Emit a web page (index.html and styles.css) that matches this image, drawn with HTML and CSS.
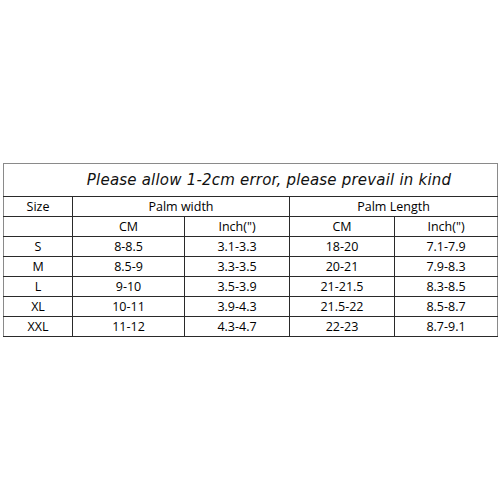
FILE: index.html
```html
<!DOCTYPE html>
<html>
<head>
<meta charset="utf-8">
<link rel="stylesheet" href="styles.css">
</head>
<body>
<div class="page">
<table class="size-table">
  <colgroup>
    <col class="c-size">
    <col class="c-a">
    <col class="c-b">
    <col class="c-c">
    <col class="c-d">
  </colgroup>
  <tr class="title-row"><td colspan="5" class="title">Please allow 1-2cm error, please prevail in kind</td></tr>
  <tr><td>Size</td><td colspan="2">Palm width</td><td colspan="2">Palm Length</td></tr>
  <tr><td></td><td>CM</td><td>Inch(")</td><td>CM</td><td>Inch(")</td></tr>
  <tr><td>S</td><td>8-8.5</td><td>3.1-3.3</td><td>18-20</td><td>7.1-7.9</td></tr>
  <tr><td>M</td><td>8.5-9</td><td>3.3-3.5</td><td>20-21</td><td>7.9-8.3</td></tr>
  <tr><td>L</td><td>9-10</td><td>3.5-3.9</td><td>21-21.5</td><td>8.3-8.5</td></tr>
  <tr><td>XL</td><td>10-11</td><td>3.9-4.3</td><td>21.5-22</td><td>8.5-8.7</td></tr>
  <tr><td>XXL</td><td>11-12</td><td>4.3-4.7</td><td>22-23</td><td>8.7-9.1</td></tr>
</table>
</div>
</body>
</html>
```
FILE: styles.css
```css
html, body {
  margin: 0;
  padding: 0;
  background: #ffffff;
}
.page {
  width: 500px;
  height: 500px;
  padding: 163px 0 0 3px;
  box-sizing: border-box;
}
.size-table {
  border-collapse: collapse;
  table-layout: fixed;
  width: 494px;
  font-family: "Open Sans", "Noto Sans", sans-serif;
  font-size: 12.5px;
  color: #000;
  border: 1px solid #8a8a8a;
}
.c-size { width: 69px; }
.c-a { width: 112px; }
.c-b { width: 105px; }
.c-c { width: 105px; }
.c-d { width: 103px; }
.size-table td {
  border: 1px solid #2a2a2a;
  height: 19px;
  padding: 0;
  text-align: center;
  vertical-align: middle;
  line-height: 19px;
}
.size-table td:first-child { border-left-color: #8a8a8a; }
.size-table td:last-child { border-right-color: #8a8a8a; }
.size-table .title {
  height: 32px;
  font-family: "DejaVu Sans", sans-serif;
  font-style: italic;
  font-size: 15px;
  letter-spacing: 0.2px;
  color: #111;
  border-top-color: #8a8a8a;
  padding-left: 37px;
  text-align: center;
}
```
